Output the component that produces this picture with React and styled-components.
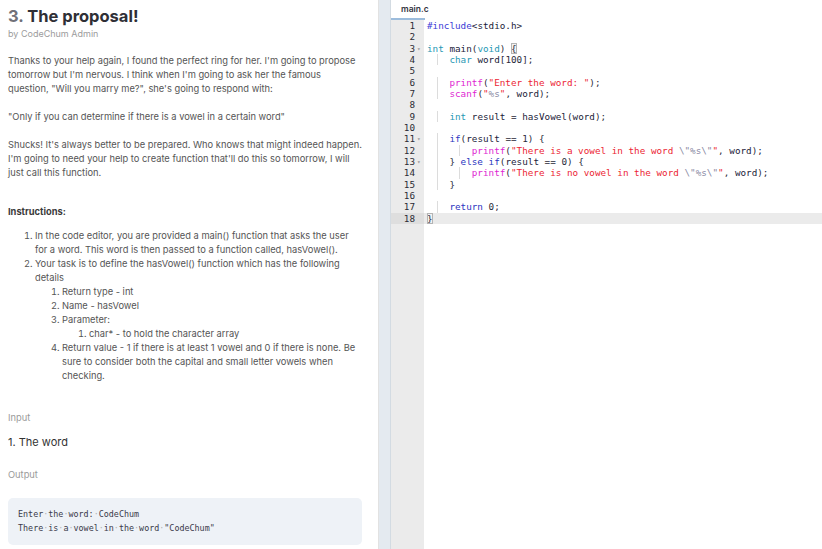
import React from 'react';
import styled, { createGlobalStyle } from 'styled-components';

const GlobalStyle = createGlobalStyle`
    html, body {
        margin: 0;
        padding: 0;
        background: #ffffff;
        overflow: hidden;
    }
    * {
        box-sizing: border-box;
    }
`;

const codeLines = [
    { indent: 0, tokens: [['pp', '#include'], ['id', '<stdio.h>']] },
    { indent: 0, tokens: [] },
    {
        indent: 0,
        fold: true,
        tokens: [['type', 'int'], ['p', ' '], ['id', 'main'], ['p', '('], ['type', 'void'], ['p', ') '], ['match', '{']],
    },
    { indent: 1, tokens: [['type', 'char'], ['p', ' '], ['id', 'word'], ['p', '['], ['num', '100'], ['p', '];']] },
    { indent: 0, tokens: [] },
    { indent: 1, tokens: [['fn', 'printf'], ['p', '('], ['str', '"Enter the word: "'], ['p', ');']] },
    { indent: 1, tokens: [['fn', 'scanf'], ['p', '('], ['str', '"'], ['esc', '%s'], ['str', '"'], ['p', ', '], ['id', 'word'], ['p', ');']] },
    { indent: 0, tokens: [] },
    {
        indent: 1,
        tokens: [['type', 'int'], ['p', ' '], ['id', 'result'], ['p', ' = '], ['id', 'hasVowel'], ['p', '('], ['id', 'word'], ['p', ');']],
    },
    { indent: 0, tokens: [] },
    {
        indent: 1,
        fold: true,
        tokens: [['kw', 'if'], ['p', '('], ['id', 'result'], ['p', ' == '], ['num', '1'], ['p', ') {']],
    },
    {
        indent: 2,
        tokens: [
            ['fn', 'printf'],
            ['p', '('],
            ['str', '"There is a vowel in the word '],
            ['esc', '\\"%s\\"'],
            ['str', '"'],
            ['p', ', '],
            ['id', 'word'],
            ['p', ');'],
        ],
    },
    {
        indent: 1,
        fold: true,
        tokens: [['p', '} '], ['kw', 'else'], ['p', ' '], ['kw', 'if'], ['p', '('], ['id', 'result'], ['p', ' == '], ['num', '0'], ['p', ') {']],
    },
    {
        indent: 2,
        tokens: [
            ['fn', 'printf'],
            ['p', '('],
            ['str', '"There is no vowel in the word '],
            ['esc', '\\"%s\\"'],
            ['str', '"'],
            ['p', ', '],
            ['id', 'word'],
            ['p', ');'],
        ],
    },
    { indent: 1, tokens: [['p', '}']] },
    { indent: 0, tokens: [] },
    { indent: 1, tokens: [['kw', 'return'], ['p', ' '], ['num', '0'], ['p', ';']] },
    { indent: 0, active: true, tokens: [['match', '}']] },
];

const tokenColors = {
    pp: '#3b3bd6',
    type: '#1f98b4',
    kw: '#2b35c0',
    fn: '#e01fd2',
    str: '#ec1f35',
    esc: '#8a8aa4',
    id: '#1c1c3a',
    num: '#2a2a3a',
    p: '#2a2a3a',
    match: '#2a2a3a',
};

const outputLines = ['Enter the word: CodeChum', 'There is a vowel in the word "CodeChum"'];

function App() {
    return (
        <>
            <GlobalStyle />
            <Page>
                <Problem>
                    <Title>
                        <Number>3.</Number> The proposal!
                    </Title>
                    <Byline>by CodeChum Admin</Byline>
                    <Paragraph $top={13}>
                        Thanks to your help again, I found the perfect ring for her. I'm going to propose tomorrow but
                        I'm nervous. I think when I'm going to ask her the famous question, "Will you marry me?", she's
                        going to respond with:
                    </Paragraph>
                    <Paragraph $top={14}>"Only if you can determine if there is a vowel in a certain word"</Paragraph>
                    <Paragraph $top={14}>
                        Shucks! It's always better to be prepared. Who knows that might indeed happen. I'm going to need
                        your help to create function that'll do this so tomorrow, I will just call this function.
                    </Paragraph>
                    <Heading>Instructions:</Heading>
                    <List $top={10}>
                        <li>
                            In the code editor, you are provided a main() function that asks the user for a word. This
                            word is then passed to a function called, hasVowel().
                        </li>
                        <li>
                            Your task is to define the hasVowel() function which has the following details
                            <List>
                                <li>Return type - int</li>
                                <li>Name - hasVowel</li>
                                <li>
                                    Parameter:
                                    <List>
                                        <li>char* - to hold the character array</li>
                                    </List>
                                </li>
                                <li>
                                    Return value - 1 if there is at least 1 vowel and 0 if there is none. Be sure to
                                    consider both the capital and small letter vowels when checking.
                                </li>
                            </List>
                        </li>
                    </List>
                    <Label $top={28}>Input</Label>
                    <InputItem>1. The word</InputItem>
                    <Label $top={18}>Output</Label>
                    <OutputBox>
                        {outputLines.map((line, i) => (
                            <OutputLine key={i}>
                                {line.split(' ').map((word, j) => (
                                    <React.Fragment key={j}>
                                        {j > 0 && <Space>·</Space>}
                                        {word}
                                    </React.Fragment>
                                ))}
                            </OutputLine>
                        ))}
                    </OutputBox>
                </Problem>
                <Splitter />
                <Editor>
                    <TabBar>
                        <Tab>main.c</Tab>
                    </TabBar>
                    <EditorBody>
                        <Gutter>
                            {codeLines.map((line, i) => (
                                <GutterRow key={i} $active={line.active}>
                                    <LineNo>{i + 1}</LineNo>
                                    <Fold>{line.fold ? '▾' : ''}</Fold>
                                </GutterRow>
                            ))}
                        </Gutter>
                        <Code>
                            {codeLines.map((line, i) => (
                                <CodeRow key={i} $active={line.active}>
                                    {line.tokens.length > 0 &&
                                        Array.from({ length: line.indent }).map((_, k) => <Indent key={k} />)}
                                    {line.tokens.map(([kind, text], k) => (
                                        <Tok key={k} $kind={kind}>
                                            {text}
                                        </Tok>
                                    ))}
                                </CodeRow>
                            ))}
                        </Code>
                    </EditorBody>
                </Editor>
            </Page>
        </>
    );
}

export default App;

const Page = styled.div`
    display: flex;
    width: 822px;
    height: 549px;
    overflow: hidden;
`;

const Problem = styled.div`
    width: 379px;
    flex-shrink: 0;
    padding: 5px 16px 0 8px;
    border-right: 1px solid #e2e2e2;
    font-family: Inter, 'Open Sans', sans-serif;
    font-size: 9.3px;
    line-height: 14px;
    color: #555555;
`;

const Title = styled.h1`
    margin: 0;
    font-size: 16.5px;
    line-height: 22px;
    font-weight: 700;
    color: #2f2f36;
`;

const Number = styled.span`
    color: #707078;
`;

const Byline = styled.div`
    font-size: 9px;
    line-height: 14px;
    color: #9c9c9c;
`;

const Paragraph = styled.p`
    margin: ${(p) => p.$top}px 0 0;
`;

const Heading = styled.div`
    margin-top: 25px;
    font-weight: 700;
    color: #3a3a3a;
`;

const List = styled.ol`
    margin: ${(p) => p.$top || 0}px 0 0;
    padding-left: 27px;
`;

const Label = styled.div`
    margin-top: ${(p) => p.$top}px;
    color: #9a9a9a;
`;

const InputItem = styled.div`
    margin-top: 9px;
    font-size: 11px;
    line-height: 16px;
    color: #333333;
`;

const OutputBox = styled.div`
    margin-top: 16px;
    padding: 9px 10px 10px;
    background: #eef2f7;
    border-radius: 5px;
    font-family: 'DejaVu Sans Mono', 'Liberation Mono', monospace;
    font-size: 8.4px;
    color: #3a3a4a;
`;

const OutputLine = styled.div`
    line-height: 14px;
    white-space: pre;
`;

const Space = styled.span`
    color: #b3b3b3;
`;

const Splitter = styled.div`
    width: 12px;
    flex-shrink: 0;
    background: #e4eaf0;
    border-right: 1px solid #d3dbe2;
`;

const Editor = styled.div`
    flex: 1;
    display: flex;
    flex-direction: column;
    font-family: 'DejaVu Sans Mono', 'Liberation Mono', monospace;
    font-size: 9.3px;
`;

const TabBar = styled.div`
    height: 20px;
    display: flex;
    background: #ffffff;
`;

const Tab = styled.div`
    width: 34px;
    padding-left: 10px;
    font-family: Inter, 'Open Sans', sans-serif;
    font-size: 8.5px;
    font-weight: 600;
    line-height: 18px;
    color: #333340;
    border-bottom: 2px solid #9cbcdc;
`;

const EditorBody = styled.div`
    flex: 1;
    display: flex;
`;

const Gutter = styled.div`
    width: 33px;
    flex-shrink: 0;
    background: #ebebeb;
`;

const GutterRow = styled.div`
    display: flex;
    height: 11.33px;
    line-height: 11.33px;
    background: ${(p) => (p.$active ? '#dedede' : 'transparent')};
`;

const LineNo = styled.span`
    width: 24px;
    text-align: right;
    color: #2c2c34;
`;

const Fold = styled.span`
    width: 9px;
    padding-left: 2px;
    font-size: 6px;
    color: #9a9a9a;
`;

const Code = styled.div`
    flex: 1;
`;

const CodeRow = styled.div`
    height: 11.33px;
    line-height: 11.33px;
    padding-left: 3px;
    white-space: pre;
    background: ${(p) => (p.$active ? '#ebebeb' : 'transparent')};
`;

const Indent = styled.span`
    display: inline-block;
    width: 4ch;
    height: 11.33px;
    vertical-align: top;
    background: linear-gradient(#dcdcdc, #dcdcdc) no-repeat 1.8ch 0 / 1px 100%;
`;

const Tok = styled.span`
    color: ${(p) => tokenColors[p.$kind]};
    ${(p) =>
        p.$kind === 'match' &&
        `
        outline: 1px solid #b4b4b4;
        outline-offset: -1px;
        background: #f2f2f2;
    `}
`;
